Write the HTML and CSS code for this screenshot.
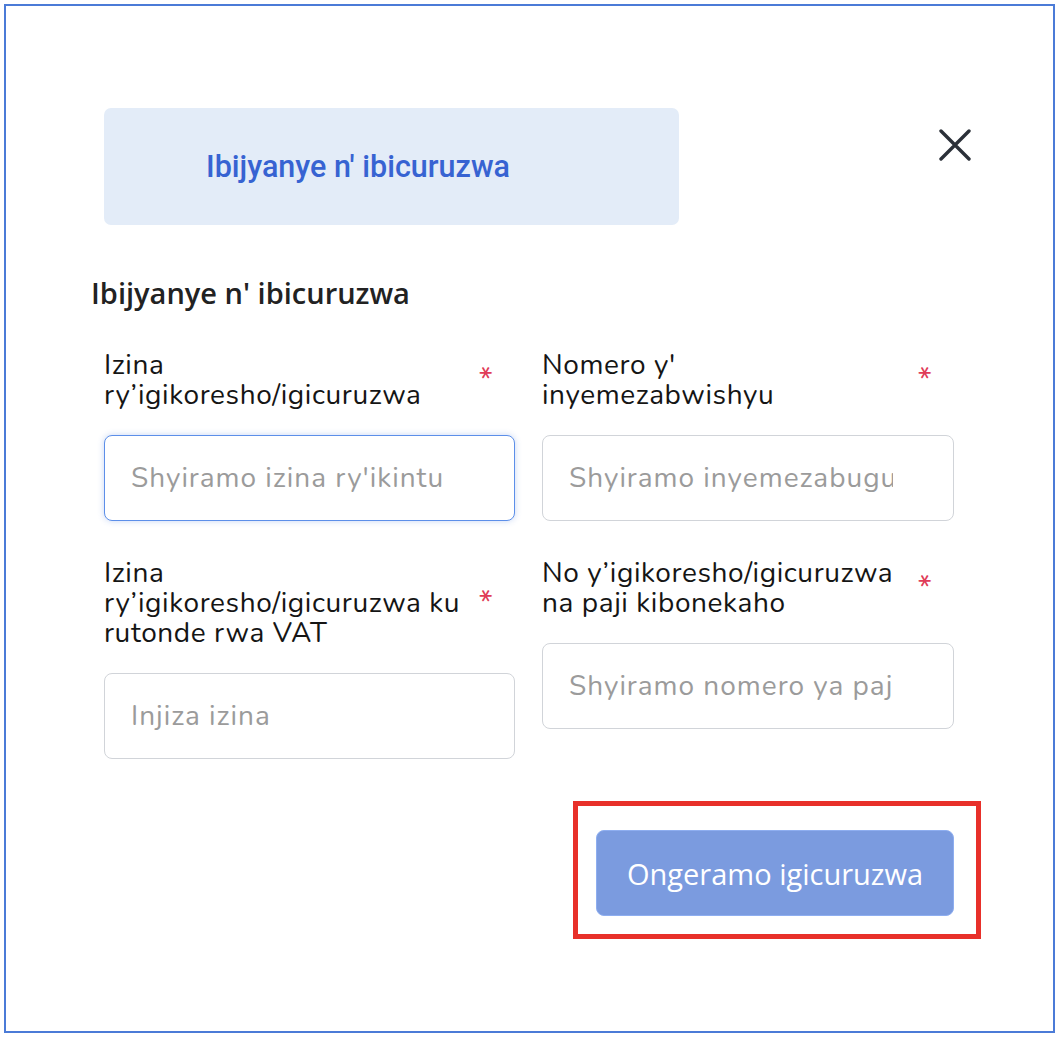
FILE: index.html
```html
<!DOCTYPE html>
<html lang="rw">
<head>
<meta charset="utf-8">
<title>Ibijyanye n' ibicuruzwa</title>
<link rel="stylesheet" href="styles.css">
</head>
<body>
<div class="frame">
  <div class="top-row">
    <div class="tab-box"><span class="tab-title">Ibijyanye n' ibicuruzwa</span></div>
    <button class="close" aria-label="Close">
      <svg width="32" height="32" viewBox="0 0 32 32"><path d="M2 2 L30 30 M30 2 L2 30" stroke="#2b3038" stroke-width="3.4" stroke-linecap="round" fill="none"/></svg>
    </button>
  </div>
  <h2 class="section-title">Ibijyanye n' ibicuruzwa</h2>
  <div class="form-grid">
    <div class="field">
      <div class="label-row"><span class="label-text">Izina ry’igikoresho/igicuruzwa</span><span class="req">*</span></div>
      <input class="input focused" type="text" placeholder="Shyiramo izina ry'ikintu">
    </div>
    <div class="field">
      <div class="label-row"><span class="label-text">Nomero y' inyemezabwishyu</span><span class="req">*</span></div>
      <input class="input" type="text" placeholder="Shyiramo inyemezabuguzi">
    </div>
    <div class="field">
      <div class="label-row"><span class="label-text">Izina ry’igikoresho/igicuruzwa ku rutonde rwa VAT</span><span class="req">*</span></div>
      <input class="input" type="text" placeholder="Injiza izina">
    </div>
    <div class="field">
      <div class="label-row"><span class="label-text">No y’igikoresho/igicuruzwa na paji kibonekaho</span><span class="req">*</span></div>
      <input class="input" type="text" placeholder="Shyiramo nomero ya paji">
    </div>
  </div>
  <div class="footer">
    <div class="highlight">
      <button class="submit">Ongeramo igicuruzwa</button>
    </div>
  </div>
</div>
</body>
</html>
```
FILE: styles.css
```css
html, body {
  margin: 0;
  padding: 0;
  background: #ffffff;
}
body {
  font-family: "Nunito", "Lato", "Noto Sans", sans-serif;
}
.frame {
  margin: 4px;
  width: 1051px;
  height: 1029px;
  box-sizing: border-box;
  border: 2px solid #4b7bd7;
  padding: 102px 0 0 85px;
}
.top-row {
  display: flex;
  align-items: flex-start;
  margin-left: 13px;
}
.tab-box {
  width: 575px;
  height: 117px;
  background: #e3ecf8;
  border-radius: 7px;
  display: flex;
  align-items: center;
  padding-left: 102px;
  box-sizing: border-box;
}
.tab-title {
  font-family: Roboto, "Noto Sans", sans-serif;
  font-weight: 500;
  font-size: 30.5px;
  color: #3763d2;
}
.close {
  margin-left: 260px;
  margin-top: 21px;
  padding: 0;
  border: 0;
  background: none;
  width: 32px;
  height: 32px;
  display: flex;
}
.section-title {
  margin: 50px 0 0 0;
  font-family: "Open Sans", "Noto Sans", sans-serif;
  font-weight: 600;
  font-size: 29px;
  line-height: 36px;
  color: #222222;
}
.form-grid {
  margin: 39px 0 0 13px;
  display: grid;
  grid-template-columns: 411px 412px;
  column-gap: 27px;
  row-gap: 37px;
  align-items: start;
}
.field {
  display: flex;
  flex-direction: column;
  gap: 25px;
}
.label-row {
  display: flex;
  align-items: center;
  padding-right: 22px;
}
.label-text {
  flex: 1;
  font-size: 28px;
  letter-spacing: 0.6px;
  line-height: 30px;
  color: #151515;
  padding-right: 12px;
}
.req {
  color: #e03c58;
  font-size: 32px;
  line-height: 30px;
}
.input {
  height: 86px;
  box-sizing: border-box;
  border: 1.5px solid #d1d4d9;
  border-radius: 8px;
  padding: 0 60px 0 26px;
  font-family: "Nunito", "Lato", "Noto Sans", sans-serif;
  font-size: 28px;
  letter-spacing: 1px;
  color: #222;
  outline: none;
  background: #fff;
  width: 100%;
}
.input::placeholder {
  color: #9b9b9b;
}
.input.focused {
  border-color: #5c8fe9;
  box-shadow: 0 0 6px rgba(70, 120, 220, 0.3);
}
.footer {
  display: flex;
  justify-content: flex-end;
  margin: 42px 72px 0 0;
}
.highlight {
  border: 5px solid #e8302a;
  padding: 24px 22px 18px 18px;
}
.submit {
  display: block;
  width: 358px;
  height: 86px;
  background: #7b9bdf;
  border: 1.5px solid #8eaef0;
  border-radius: 8px;
  color: #ffffff;
  font-family: "Open Sans", "Noto Sans", sans-serif;
  font-size: 29px;
  padding: 0;
}
```
